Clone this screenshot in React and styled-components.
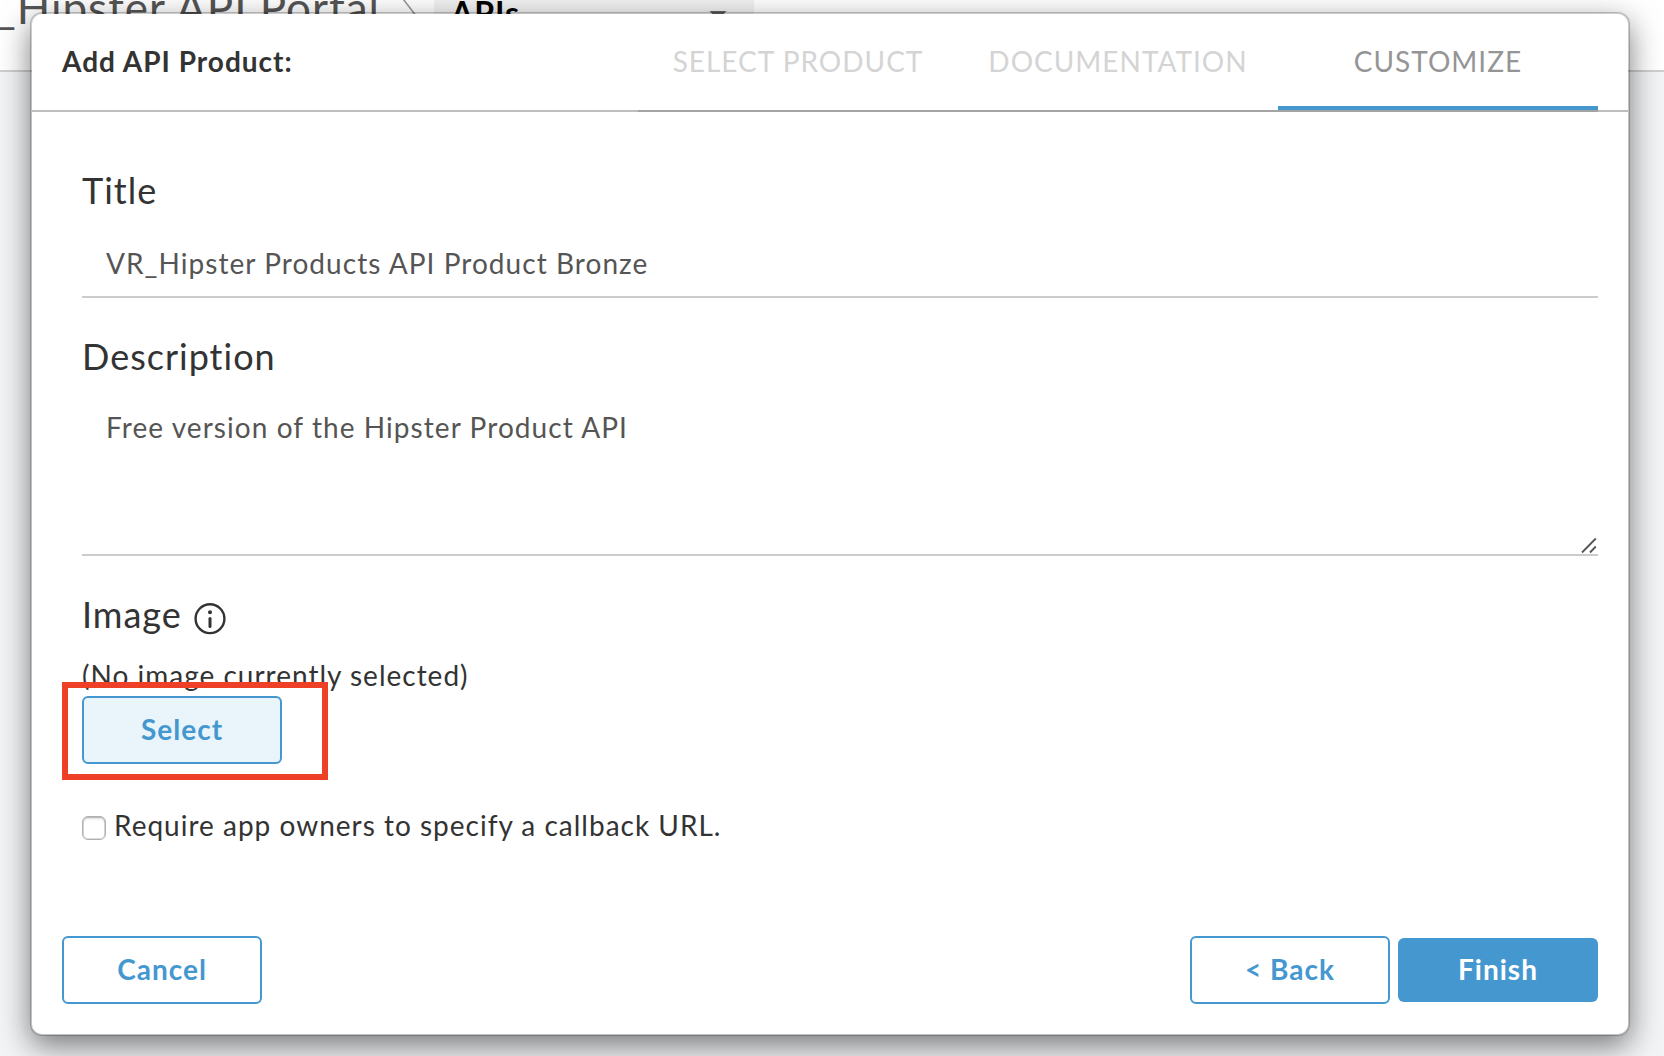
import React from "react";
import styled, { createGlobalStyle, css } from "styled-components";

const BLUE = "#4598cf";

const GlobalStyle = createGlobalStyle`
  *, *::before, *::after { box-sizing: border-box; }
  html, body { margin: 0; padding: 0; overflow: hidden; }
  body {
    font-family: Lato, "Open Sans", sans-serif;
    font-size: 28px;
    line-height: 34px;
    letter-spacing: 1px;
    color: #333;
    background: #f2f4f6;
  }
  button, input, textarea { font: inherit; letter-spacing: inherit; }
`;

const Page = styled.div`
  position: relative;
  width: 1664px;
  height: 1056px;
  overflow: hidden;
  background: #f2f4f6;
`;

const TopBar = styled.header`
  display: flex;
  align-items: flex-start;
  height: 72px;
  background: #fff;
  border-bottom: 2px solid #cecfd0;
  white-space: nowrap;
`;

const PortalName = styled.div`
  display: flex;
  justify-content: flex-end;
  flex: none;
  width: 380px;
  margin-top: -21px;
  font-size: 44px;
  line-height: 56px;
  color: #555;
`;

const Crumb = styled.svg`
  flex: none;
  width: 54px;
  height: 70px;
`;

const SectionPicker = styled.div`
  display: flex;
  justify-content: space-between;
  width: 320px;
  height: 70px;
  padding: 0 27px 0 17px;
  background: #f2f2f2;
  color: #000;
  font-size: 32px;
  font-weight: 700;
  line-height: 34px;

  span { margin-top: -4px; }
  svg { margin-top: 11px; }
`;

const Dialog = styled.section`
  position: absolute;
  top: 12px;
  left: 30px;
  width: 1600px;
  height: 1024px;
  display: flex;
  flex-direction: column;
  background: #fff;
  background-clip: padding-box;
  border: 2px solid rgba(0, 0, 0, 0.2);
  border-radius: 12px;
  box-shadow: 0 10px 30px rgba(0, 0, 0, 0.5);
`;

const DialogHeader = styled.div`
  display: flex;
  justify-content: space-between;
  height: 98px;
  padding: 0 30px;
  background: linear-gradient(#bdbdbd, #bdbdbd) bottom / 100% 2px no-repeat;
`;

const DialogTitle = styled.h1`
  margin: 30px 0 0;
  font-size: 28px;
  line-height: 34px;
  font-weight: 700;
  letter-spacing: 1px;
`;

const Steps = styled.nav`
  display: flex;
  border-bottom: 2px solid #a3a3a3;
`;

const Step = styled.div`
  width: 320px;
  padding-top: 30px;
  text-align: center;
  color: #d4d4d4;
  border-bottom: 4px solid transparent;
  ${(p) => p.$active && css`
    color: #959595;
    border-bottom-color: ${BLUE};
  `}
`;

const Form = styled.form`
  flex: 1;
  padding: 56px 30px 0 50px;
`;

const Label = styled.label`
  display: flex;
  align-items: center;
  gap: 12px;
  font-size: 36px;
  line-height: 44px;
`;

const fieldStyle = css`
  display: block;
  width: 100%;
  border: 0;
  border-bottom: 2px solid #ccc;
  border-radius: 0;
  outline: 0;
  background: transparent;
  color: #555;
`;

const TextInput = styled.input`
  ${fieldStyle}
  height: 70px;
  margin: 16px 0 36px;
  padding: 2px 24px 0;
  letter-spacing: 1.05px;
`;

const AreaWrap = styled.div`
  position: relative;
  margin: 16px 0 36px;
`;

const TextArea = styled.textarea`
  ${fieldStyle}
  height: 162px;
  padding: 16px 24px;
  line-height: 34px;
  letter-spacing: 1.07px;
  resize: none;
`;

const Grip = styled.svg`
  position: absolute;
  right: 0;
  bottom: 2px;
  width: 18px;
  height: 18px;
`;

const Note = styled.p`
  margin: 22px 0 4px;
`;

const SelectSlot = styled.div`
  position: relative;
  width: 200px;
`;

const Highlight = styled.div`
  position: absolute;
  top: -14px;
  left: -20.5px;
  width: 266.5px;
  height: 98px;
  border: 6px solid #ee4027;
`;

const Button = styled.button`
  display: flex;
  align-items: center;
  justify-content: center;
  width: 200px;
  height: 68px;
  padding: 0 0 2px;
  border: 2px solid ${BLUE};
  border-radius: 6px;
  background: ${(p) => (p.$tinted ? "#e9f4fb" : "#fff")};
  color: ${BLUE};
  font-weight: 700;
  white-space: pre;
  ${(p) => p.$primary && css`
    height: 64px;
    border: 0;
    background: ${BLUE};
    color: #fff;
  `}
`;

const CheckRow = styled.label`
  display: flex;
  align-items: flex-start;
  gap: 8px;
  margin-top: 44px;
`;

const Checkbox = styled.input`
  appearance: none;
  width: 24px;
  height: 24px;
  margin: 8px 0 0;
  border: 1.5px solid #b0b0b0;
  border-radius: 6px;
  background: #fff;
  box-shadow: inset 0 2px 2px rgba(0, 0, 0, 0.14), inset 0 0 0 0.5px #b8b8b8;
`;

const Footer = styled.footer`
  display: flex;
  align-items: center;
  justify-content: space-between;
  padding: 0 30px 30px;
`;

const ButtonPair = styled.div`
  display: flex;
  align-items: center;
  gap: 8px;
`;

const InfoIcon = styled.svg`
  width: 32px;
  height: 32px;
  margin-top: 8px;
  margin-bottom: -2px;
`;

const STEPS = ["SELECT PRODUCT", "DOCUMENTATION", "CUSTOMIZE"];

export default function App() {
  return (
    <Page>
      <GlobalStyle />
      <TopBar>
        <PortalName>_Hipster API Portal</PortalName>
        <Crumb viewBox="0 0 54 70" fill="none" stroke="#999" strokeWidth="1.6">
          <path d="M13 -14 L37 17 L13 48" />
        </Crumb>
        <SectionPicker>
          <span>APIs</span>
          <svg width="18" height="10" viewBox="0 0 18 10">
            <path d="M0.5 0H17.5L9 9Z" fill="#666" />
          </svg>
        </SectionPicker>
      </TopBar>

      <Dialog>
        <DialogHeader>
          <DialogTitle>Add API Product:</DialogTitle>
          <Steps>
            {STEPS.map((s) => (
              <Step key={s} $active={s === "CUSTOMIZE"}>{s}</Step>
            ))}
          </Steps>
        </DialogHeader>

        <Form>
          <Label htmlFor="title">Title</Label>
          <TextInput id="title" defaultValue="VR_Hipster Products API Product Bronze" />

          <Label htmlFor="description">Description</Label>
          <AreaWrap>
            <TextArea id="description" spellCheck={false} defaultValue="Free version of the Hipster Product API" />
            <Grip viewBox="0 0 18 18" stroke="#555" strokeWidth="1.8">
              <path d="M2 16.5L15.8 2.5M10 16.5L15.8 10.5" />
            </Grip>
          </AreaWrap>

          <Label as="div">
            Image
            <InfoIcon viewBox="0 0 32 32" fill="none" stroke="#333">
              <circle cx="16" cy="15.7" r="14.4" strokeWidth="2.4" />
              <path d="M16 15.5V23.5" strokeWidth="3" strokeLinecap="round" />
              <circle cx="16" cy="9.2" r="2" fill="#333" stroke="none" />
            </InfoIcon>
          </Label>
          <Note>(No image currently selected)</Note>
          <SelectSlot>
            <Button type="button" $tinted>Select</Button>
            <Highlight />
          </SelectSlot>

          <CheckRow>
            <Checkbox type="checkbox" />
            Require app owners to specify a callback URL.
          </CheckRow>
        </Form>

        <Footer>
          <Button type="button">Cancel</Button>
          <ButtonPair>
            <Button type="button">&lt; Back</Button>
            <Button type="button" $primary>Finish</Button>
          </ButtonPair>
        </Footer>
      </Dialog>
    </Page>
  );
}
